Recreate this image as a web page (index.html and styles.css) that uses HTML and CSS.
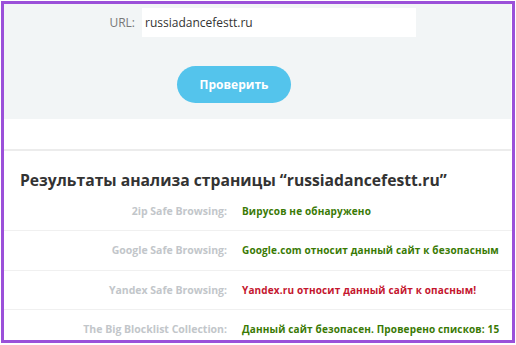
FILE: index.html
```html
<!DOCTYPE html>
<html lang="ru">
<head>
	<meta charset="UTF-8">
	<title>Проверка сайта</title>
	<link rel="stylesheet" href="styles.css">
</head>
<body>
<div class="frame">
	<div class="check-form">
		<div class="url-row">
			<label class="url-label" for="url">URL:</label>
			<input id="url" class="url-input" type="text" value="russiadancefestt.ru"/>
		</div>
		<div class="btn-row">
			<button class="btn-check" type="button">Проверить</button>
		</div>
	</div>
	<div class="gap"></div>
	<div class="results">
		<h2 class="results-title">Результаты анализа страницы “russiadancefestt.ru”</h2>
		<div class="result-row">
			<div class="result-name">2ip Safe Browsing:</div>
			<div class="result-value ok">Вирусов не обнаружено</div>
		</div>
		<div class="result-row">
			<div class="result-name">Google Safe Browsing:</div>
			<div class="result-value ok">Google.com относит данный сайт к безопасным</div>
		</div>
		<div class="result-row">
			<div class="result-name">Yandex Safe Browsing:</div>
			<div class="result-value bad">Yandex.ru относит данный сайт к опасным!</div>
		</div>
		<div class="result-row">
			<div class="result-name">The Big Blocklist Collection:</div>
			<div class="result-value ok">Данный сайт безопасен. Проверено списков: 15</div>
		</div>
	</div>
</div>
</body>
</html>
```

FILE: styles.css
```css
html, body {
	margin: 0;
	background: #ffffff;
}
body {
	font-family: "Open Sans", "Liberation Sans", sans-serif;
	color: #333333;
}
.frame {
	margin: 1px;
	height: 336px;
	border: 3px solid #9b50d9;
	overflow: hidden;
	background: #ffffff;
}
.check-form {
	background: #f2f5f6;
	height: 115px;
	margin-right: 1px;
}
.url-row {
	display: flex;
	align-items: center;
	padding-top: 4px;
}
.url-label {
	width: 131px;
	text-align: right;
	padding-right: 7px;
	font-size: 12px;
	color: #777777;
}
.url-input {
	width: 274px;
	height: 29px;
	box-sizing: border-box;
	border: none;
	background: #ffffff;
	padding: 0 3px;
	font-family: inherit;
	font-size: 12px;
	color: #333333;
	outline: none;
}
.btn-row {
	padding: 29px 0 0 173px;
}
.btn-check {
	width: 114px;
	height: 37px;
	border: none;
	border-radius: 19px;
	background: #54c4ec;
	color: #ffffff;
	font-family: inherit;
	font-weight: 700;
	font-size: 12px;
	cursor: pointer;
}
.gap {
	height: 30px;
	margin-right: 1px;
	border-bottom: 2px solid #ececec;
}
.results {
	padding-top: 18px;
}
.results-title {
	margin: 0 0 1px 16px;
	font-size: 15.7px;
	font-weight: 700;
	line-height: 22px;
	color: #333333;
}
.result-row {
	display: grid;
	grid-template-columns: 223px 1fr;
	column-gap: 15px;
	align-items: center;
	height: 38px;
	border-bottom: 1px solid #f0f0f0;
	font-weight: 700;
}
.result-row + .result-row {
	height: 38.5px;
}
.result-name {
	text-align: right;
	font-size: 10.5px;
	color: #c2c6ca;
}
.result-value {
	white-space: nowrap;
	font-size: 10px;
	letter-spacing: 0.15px;
}
.ok {
	color: #3a7a05;
}
.bad {
	color: #c4162e;
}
```
